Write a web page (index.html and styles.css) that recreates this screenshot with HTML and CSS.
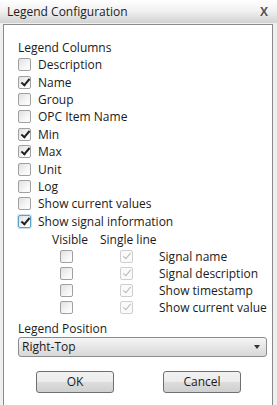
FILE: index.html
```html
<!DOCTYPE html>
<html lang="en">
  <head>
    <meta charset="UTF-8" />
    <title>Legend Configuration</title>
    <link rel="stylesheet" href="styles.css">
  </head>
  <body>
    <div class="window">
      <div class="titlebar">
        <span class="title">Legend Configuration</span>
        <span class="close">X</span>
      </div>

      <div class="panel">
        <div class="label">Legend Columns</div>
        <div class="columns">
          <label class="check"><span class="box"></span>Description</label>
          <label class="check"><span class="box on"></span>Name</label>
          <label class="check"><span class="box"></span>Group</label>
          <label class="check"><span class="box"></span>OPC Item Name</label>
          <label class="check"><span class="box on"></span>Min</label>
          <label class="check"><span class="box on"></span>Max</label>
          <label class="check"><span class="box"></span>Unit</label>
          <label class="check"><span class="box"></span>Log</label>
          <label class="check"><span class="box"></span>Show current values</label>
          <label class="check"><span class="box on focus"></span>Show signal information</label>
        </div>

        <div class="signal">
          <span class="head">Visible</span>
          <span class="head">Single line</span>
          <span></span>

          <span class="box vis"></span><span class="box on disabled"></span><span class="name">Signal name</span>
          <span class="box vis"></span><span class="box on disabled"></span><span class="name">Signal description</span>
          <span class="box vis"></span><span class="box on disabled"></span><span class="name">Show timestamp</span>
          <span class="box vis"></span><span class="box on disabled"></span><span class="name">Show current value</span>
        </div>

        <div class="label pos">Legend Position</div>
        <div class="select">
          <span>Right-Top</span>
          <span class="arrow"></span>
        </div>

        <div class="buttons">
          <button>OK</button>
          <button>Cancel</button>
        </div>
      </div>
    </div>
  </body>
</html>
```

FILE: styles.css
```css
body {
  margin: 0;
  background: #f0f0f0;
  font-family: "Open Sans", "Noto Sans", sans-serif;
  font-size: 12px;
  color: #1a1a1a;
}

.window {
  width: 277px;
  height: 405px;
  background: #f0f0f0;
}

.titlebar {
  height: 23px;
  display: flex;
  align-items: center;
  justify-content: space-between;
  padding: 0 9px 0 7px;
  background: linear-gradient(#ffffff, #f2f2f2 45%, #d2d2d2);
  font-size: 12px;
  color: #222;
}

.close {
  font-weight: bold;
  font-size: 12px;
  color: #555;
  text-shadow: 0 0 1px #fff, 0 0 2px #fff;
}

.panel {
  margin: 1px 4px 0 3px;
  height: 374px;
  background: #fff;
  border: 1px solid #8a8a8a;
  padding: 14px 0 0 14px;
}

.label {
  height: 17px;
  line-height: 17px;
}

.columns {
  display: flex;
  flex-direction: column;
}

.check {
  display: flex;
  align-items: center;
  gap: 7px;
  height: 17.4px;
}

.box {
  width: 11px;
  height: 11px;
  border: 1px solid #a0a0a0;
  border-radius: 2px;
  background: linear-gradient(135deg, #e0e0e0, #f6f6f6 60%, #ffffff);
  position: relative;
}

.box.on::after {
  content: "";
  position: absolute;
  left: 4px;
  top: 0px;
  width: 3px;
  height: 7px;
  border: solid #222;
  border-width: 0 2px 2px 0;
  transform: rotate(40deg);
}

.box.focus {
  border-color: #5aa0c8;
  box-shadow: 0 0 0 1px #c6e2f2;
}

.box.disabled {
  border-color: #cfcfcf;
  background: #fafafa;
  margin-left: 20px;
}

.box.disabled::after {
  border-color: #b8b8b8;
  border-width: 0 1px 1px 0;
}

.signal {
  display: grid;
  grid-template-columns: 48px 59px auto;
  grid-auto-rows: 17px;
  align-items: center;
  justify-items: start;
  margin: 1px 0 0 34px;
}

.signal .vis {
  margin-left: 8px;
}

.pos {
  margin-top: 4px;
}

.select {
  display: flex;
  align-items: center;
  justify-content: space-between;
  width: 238px;
  height: 18px;
  padding: 0 6px 0 3px;
  border: 1px solid #8c8c8c;
  border-radius: 3px;
  background: linear-gradient(#f6f6f6, #e6e6e6 50%, #d8d8d8);
}

.arrow {
  width: 0;
  height: 0;
  border-left: 3px solid transparent;
  border-right: 3px solid transparent;
  border-top: 4px solid #333;
}

.buttons {
  display: flex;
  gap: 49px;
  margin: 14px 0 0 18px;
}

.buttons button {
  width: 78px;
  height: 22px;
  font-family: inherit;
  font-size: 12px;
  color: #1a1a1a;
  border: 1px solid #707070;
  border-radius: 3px;
  background: linear-gradient(#f2f2f2, #ebebeb 50%, #dddddd 51%, #cfcfcf);
}
```
